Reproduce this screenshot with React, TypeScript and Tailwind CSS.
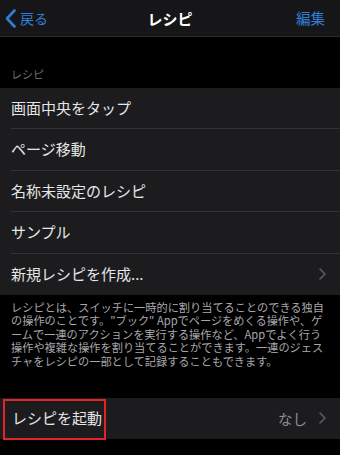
import React from 'react';

const font = { fontFamily: '"Noto Sans CJK JP", "Noto Sans", sans-serif' };

const recipes = ['画面中央をタップ', 'ページ移動', '名称未設定のレシピ', 'サンプル'];

function Chevron() {
  return (
    <svg width="7" height="12" viewBox="0 0 7 12" className="shrink-0">
      <path d="M1 1l5 5-5 5" fill="none" stroke="#5c5c60" strokeWidth="1.6" strokeLinecap="round" strokeLinejoin="round" />
    </svg>
  );
}

export default function App() {
  return (
    <div className="w-[340px] h-[455px] bg-black overflow-hidden text-[#e6e6e6]" style={font}>
      {/* ナビゲーションバー */}
      <div className="h-[37px] bg-[#161618] border-b border-[#2a2a2c] flex items-center justify-between px-[5px]">
        <div className="flex items-center gap-[4px] w-[90px] text-[#2f7fd6]">
          <svg width="11" height="19" viewBox="0 0 11 19">
            <path d="M9.5 1.5L2 9.5l7.5 8" fill="none" stroke="#2f7fd6" strokeWidth="2.6" strokeLinecap="round" strokeLinejoin="round" />
          </svg>
          <span className="text-[14px] leading-none">戻る</span>
        </div>
        <div className="text-[15px] font-semibold leading-none text-white">レシピ</div>
        <div className="w-[90px] flex justify-end pr-[10px] text-[14.5px] leading-none text-[#2f7fd6]">編集</div>
      </div>

      {/* セクションヘッダー */}
      <div className="h-[51px] flex items-end px-[11px] pb-[8px] text-[11px] leading-none text-[#6e6e73]">レシピ</div>

      {/* レシピ一覧 */}
      <div className="bg-[#1c1c1e]">
        {recipes.map(name => (
          <div key={name} className="pl-[11px]">
            <div className="h-[41.4px] flex items-center border-b border-[#323234] text-[15px]">{name}</div>
          </div>
        ))}
        <div className="h-[41.4px] flex items-center justify-between pl-[11px] pr-[14px] text-[15px]">
          <span>新規レシピを作成...</span>
          <Chevron />
        </div>
      </div>

      {/* 説明文 */}
      <div className="px-[11px] pt-[6px] text-[11.2px] leading-[13.4px] text-[#a8a8ac] whitespace-nowrap">
        レシピとは、スイッチに一時的に割り当てることのできる独自<br />
        の操作のことです。"ブック" Appでページをめくる操作や、ゲ<br />
        ームで一連のアクションを実行する操作など、Appでよく行う<br />
        操作や複雑な操作を割り当てることができます。一連のジェス<br />
        チャをレシピの一部として記録することもできます。
      </div>

      {/* レシピを起動 */}
      <div className="mt-[30px] h-[41px] bg-[#1c1c1e] flex items-center justify-between pr-[14px] relative">
        <span className="pl-[12px] text-[15px]">レシピを起動</span>
        <div className="flex items-center gap-[12px]">
          <span className="text-[14.5px] text-[#8e8e93]">なし</span>
          <Chevron />
        </div>
        <div className="absolute left-[3px] top-[1px] w-[103px] h-[41px] border-2 border-[#e0262a] pointer-events-none" />
      </div>
    </div>
  );
}
